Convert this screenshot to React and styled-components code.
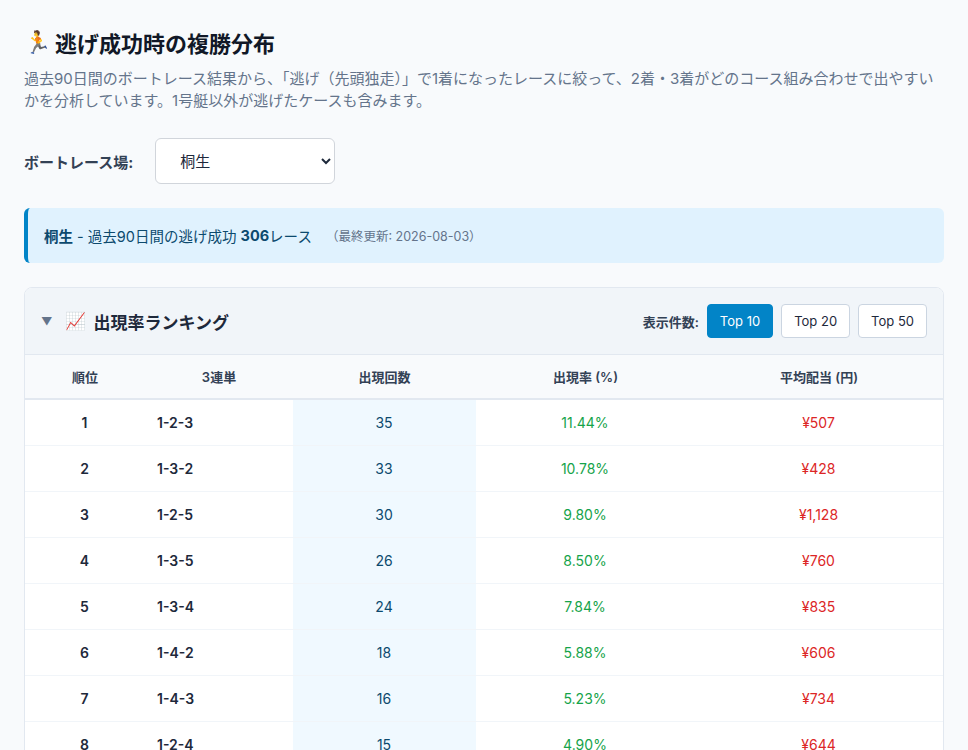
import React, { useState } from "react";
import styled, { createGlobalStyle } from "styled-components";

const G = createGlobalStyle`
  body { margin:0; background:#f8fafc; font-family: Inter, "Noto Sans CJK JP", sans-serif; color:#1e293b; }
`;
const Page = styled.div`padding: 26px 24px 0 24px;`;
const Title = styled.h1`margin:0 0 10px; font-size:22px; font-weight:700; color:#111827; display:flex; align-items:center; gap:4px;`;
const Desc = styled.p`margin:0; font-size:15px; line-height:22px; color:#64748b; padding-right:4px;`;
const SelRow = styled.div`display:flex; align-items:center; gap:22px; margin-top:26px;`;
const Label = styled.label`font-size:15px; font-weight:700; color:#334155;`;
const Select = styled.select`width:180px; height:46px; border:1px solid #d1d5db; border-radius:6px; background:#fff; font-size:15px; padding:0 16px 0 20px; font-family:inherit; color:#1e293b;`;
const Info = styled.div`margin-top:24px; background:#e0f2fe; border-left:4px solid #0284c7; border-radius:6px; height:55px; display:flex; align-items:center; padding-left:16px; font-size:14.5px; color:#0c4a6e;`;
const Small = styled.span`font-size:12.5px; color:#64748b; margin-left:14px;`;
const Card = styled.div`margin-top:24px; border:1px solid #e2e8f0; border-radius:8px; background:#fff; overflow:hidden;`;
const CardHead = styled.div`height:66px; background:#f1f5f9; display:flex; align-items:center; padding:0 16px; border-bottom:1px solid #e2e8f0;`;
const CardTitle = styled.div`font-size:17px; font-weight:700; color:#1e293b; display:flex; align-items:center; gap:8px; flex:1;`;
const Tri = styled.span`font-size:11px; color:#64748b; margin-right:4px;`;
const Count = styled.div`display:flex; align-items:center; gap:8px; font-size:13px; font-weight:600; color:#334155;`;
const Btn = styled.button`height:34px; padding:0 12px; border-radius:4px; font-family:inherit; font-size:13px; border:1px solid ${p=>p.$on?"#0284c7":"#cbd5e1"}; background:${p=>p.$on?"#0284c7":"#fff"}; color:${p=>p.$on?"#fff":"#1e293b"};`;
const Table = styled.table`width:100%; border-collapse:collapse; font-size:14px;`;
const Th = styled.th`height:43px; padding:0; background:#f8fafc; font-size:13px; font-weight:600; color:#334155; border-bottom:2px solid #e2e8f0; text-align:center;`;
const Td = styled.td`height:45px; padding-top:0; padding-bottom:0; border-bottom:1px solid #f1f5f9; text-align:${p=>p.$left?"left":"center"}; padding-left:${p=>p.$left?"12px":"0"};
  font-weight:${p=>p.$bold?600:400}; color:${p=>p.$c||"#1e293b"}; background:${p=>p.$bg||"transparent"};`;

const rows = [
  [1,"1-2-3",35,"11.44%","¥507"],[2,"1-3-2",33,"10.78%","¥428"],[3,"1-2-5",30,"9.80%","¥1,128"],
  [4,"1-3-5",26,"8.50%","¥760"],[5,"1-3-4",24,"7.84%","¥835"],[6,"1-4-2",18,"5.88%","¥606"],
  [7,"1-4-3",16,"5.23%","¥734"],[8,"1-2-4",15,"4.90%","¥644"],[9,"1-5-2",12,"3.92%","¥890"],[10,"1-4-5",11,"3.59%","¥1,020"]];

export default function App(){
  const [n,setN]=useState(10);
  return <Page><G/>
    <Title><span>🏃</span>逃げ成功時の複勝分布</Title>
    <Desc>過去90日間のボートレース結果から、「逃げ（先頭独走）」で1着になったレースに絞って、2着・3着がどのコース組み合わせで出やすいかを分析しています。1号艇以外が逃げたケースも含みます。</Desc>
    <SelRow><Label>ボートレース場:</Label><Select defaultValue="桐生"><option>桐生</option></Select></SelRow>
    <Info><b>桐生</b>&nbsp;- 過去90日間の逃げ成功&nbsp;<b>306</b>レース<Small>（最終更新: 2026-08-03）</Small></Info>
    <Card>
      <CardHead>
        <CardTitle><Tri>▼</Tri><span>📈</span>出現率ランキング</CardTitle>
        <Count>表示件数:{[10,20,50].map(v=><Btn key={v} $on={n===v} onClick={()=>setN(v)}>Top {v}</Btn>)}</Count>
      </CardHead>
      <Table>
        <colgroup><col style={{width:120}}/><col style={{width:148}}/><col style={{width:183}}/><col style={{width:219}}/><col/></colgroup>
        <thead><tr><Th>順位</Th><Th>3連単</Th><Th>出現回数</Th><Th>出現率 (%)</Th><Th>平均配当 (円)</Th></tr></thead>
        <tbody>{rows.map(r=><tr key={r[0]}>
          <Td $bold>{r[0]}</Td><Td $left $bold>{r[1]}</Td><Td $bg="#f0f9ff" $c="#0c4a6e">{r[2]}</Td>
          <Td $c="#16a34a">{r[3]}</Td><Td $c="#dc2626">{r[4]}</Td></tr>)}</tbody>
      </Table>
    </Card>
  </Page>;
}
